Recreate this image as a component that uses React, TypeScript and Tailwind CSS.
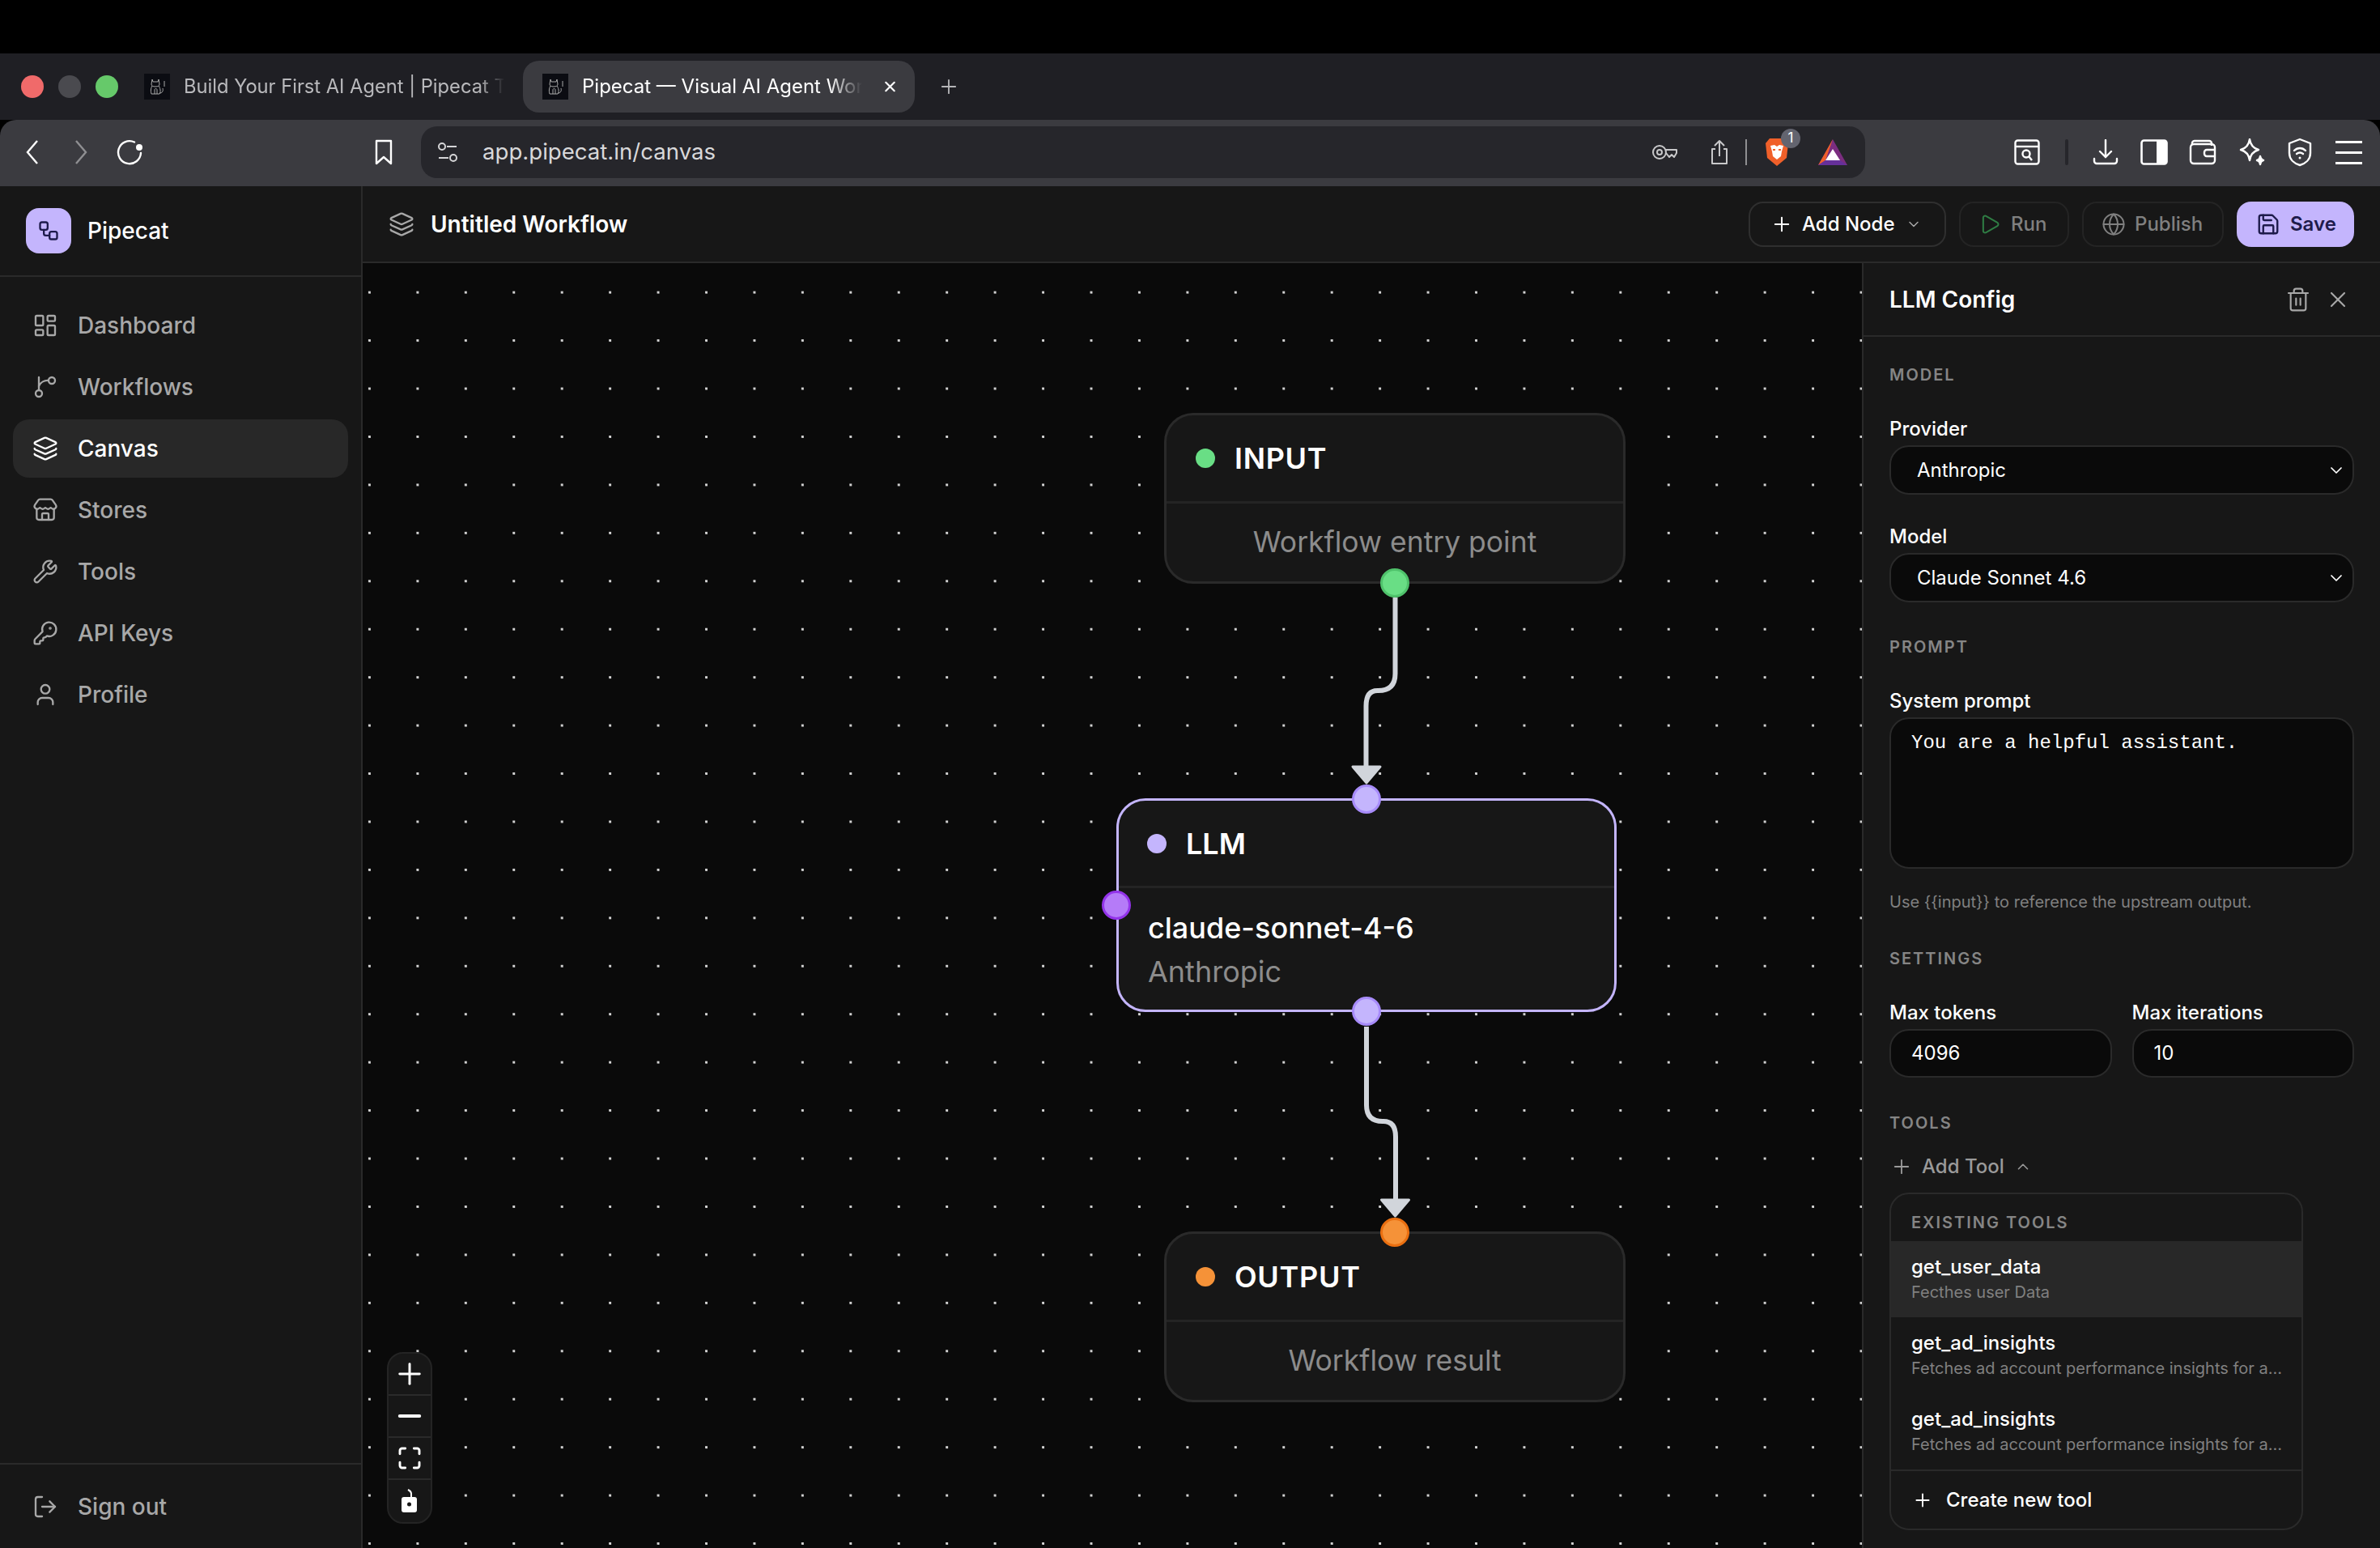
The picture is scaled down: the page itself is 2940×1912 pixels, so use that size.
import {
  ChevronDown,
  ChevronUp,
  Globe,
  KeyRound,
  Layers,
  LayoutDashboard,
  LogOut,
  Maximize,
  Minus,
  Play,
  Plus,
  Save,
  Store,
  Trash2,
  User,
  Workflow,
  Wrench,
  X,
} from 'lucide-react';

function BranchIcon({ className, strokeWidth }: { className?: string; strokeWidth?: number }) {
  return (
    <svg viewBox="0 0 24 24" className={className} fill="none" stroke="currentColor" strokeWidth={strokeWidth} strokeLinecap="round" strokeLinejoin="round">
      <path d="M6 3v12" />
      <circle cx="18" cy="6" r="3" />
      <circle cx="6" cy="18" r="3" />
      <path d="M15 6a9 9 0 0 0-9 5" />
    </svg>
  );
}

const navItems = [
  { label: 'Dashboard', icon: LayoutDashboard },
  { label: 'Workflows', icon: BranchIcon },
  { label: 'Canvas', icon: Layers, active: true },
  { label: 'Stores', icon: Store },
  { label: 'Tools', icon: Wrench },
  { label: 'API Keys', icon: KeyRound },
  { label: 'Profile', icon: User },
];

const tools = [
  { name: 'get_user_data', desc: 'Fecthes user Data', active: true },
  { name: 'get_ad_insights', desc: 'Fetches ad account performance insights for a...' },
  { name: 'get_ad_insights', desc: 'Fetches ad account performance insights for a...' },
];

function CatFavicon() {
  return (
    <div className="flex h-[32px] w-[32px] shrink-0 items-center justify-center bg-[#0b0c12]">
      <svg viewBox="0 0 32 32" className="h-[32px] w-[32px]" fill="none" stroke="#a8a8a8" strokeWidth="1">
        <path d="M10 7l1 3h6l1-3 1 6c0 2-2 3-5 3s-5-1-5-3z" />
        <path d="M10 15c-2 3-2 7-1 10h10c2-3 1-7-1-10" />
        <path d="M13 25v-5c0-2 3-2 3 0v5" />
        <path d="M19 24c3 0 5-2 4-6M25 9v7" />
      </svg>
    </div>
  );
}

function BrowserChrome() {
  return (
    <div className="shrink-0 font-['Inter',sans-serif]">
      <div className="h-[66px] bg-black" />
      <div className="flex h-[82px] items-center bg-[#1f1f24]">
        <div className="ml-[26px] flex w-[152px] gap-[18px]">
          <span className="h-[28px] w-[28px] rounded-full bg-[#f06a6a]" />
          <span className="h-[28px] w-[28px] rounded-full bg-[#4a4a4f]" />
          <span className="h-[28px] w-[28px] rounded-full bg-[#66c96a]" />
        </div>
        <div className="flex w-[468px] items-center gap-[17px]">
          <CatFavicon />
          <span className="w-[396px] whitespace-nowrap text-[23.7px] text-[#b9b9bc] [mask-image:linear-gradient(to_right,black_92%,transparent)]">
            Build Your First AI Agent | Pipecat T
          </span>
        </div>
        <div className="flex h-[64px] w-[484px] items-center rounded-[20px] bg-[#3b3b40] pl-[24px] pr-[20px]">
          <CatFavicon />
          <span className="ml-[17px] w-[346px] whitespace-nowrap text-[24px] text-white [mask-image:linear-gradient(to_right,black_88%,transparent)]">
            Pipecat — Visual AI Agent Wor
          </span>
          <X className="ml-[24px] h-[26px] w-[26px] text-white" strokeWidth={2.4} />
        </div>
        <Plus className="ml-[28px] h-[28px] w-[28px] text-[#b5b5b8]" strokeWidth={1.6} />
      </div>
      <div className="flex h-[82px] items-center rounded-t-[20px] bg-[#3b3b40] pb-[2px]">
        <svg viewBox="0 0 16 32" className="ml-[32px] h-[32px] w-[16px]" fill="none" stroke="white" strokeWidth="2.4">
          <path d="M14 2L2 16l12 14" />
        </svg>
        <svg viewBox="0 0 16 32" className="ml-[44px] h-[32px] w-[16px]" fill="none" stroke="#8f8f92" strokeWidth="2.4">
          <path d="M2 2l12 14L2 30" />
        </svg>
        <svg viewBox="0 0 34 32" className="ml-[36px] h-[32px] w-[34px]" fill="none" stroke="white" strokeWidth="2.4">
          <path d="M22 3.5A14 14 0 1 0 30 17" strokeLinecap="round" />
          <circle cx="28" cy="10" r="4" fill="white" stroke="none" />
        </svg>
        <svg viewBox="0 0 24 32" className="ml-[284px] h-[32px] w-[24px]" fill="none" stroke="white" strokeWidth="2.4" strokeLinejoin="round">
          <path d="M3 2h18v28l-9-8-9 8z" />
        </svg>
        <div className="ml-[34px] flex h-[64px] w-[1784px] items-center rounded-[20px] bg-[#26262b] pl-[20px]">
          <svg viewBox="0 0 26 26" className="h-[26px] w-[26px]" fill="none" stroke="#d5d5d7" strokeWidth="2">
            <circle cx="6" cy="6" r="4" />
            <path d="M12 6h12M2 20h12" />
            <circle cx="20" cy="20" r="4" />
          </svg>
          <span className="ml-[30px] text-[27.6px] text-[#d8d8da]">app.pipecat.in/canvas</span>
          <div className="ml-auto flex items-center">
            <svg viewBox="0 0 32 26" className="h-[26px] w-[32px]" fill="none" stroke="#c8c8ca" strokeWidth="2">
              <circle cx="10" cy="13" r="8" />
              <circle cx="10" cy="13" r="3" />
              <path d="M18 10h13v4l-3 5-3-3-3 3-4-5" strokeLinejoin="round" />
            </svg>
            <svg viewBox="0 0 22 32" className="ml-[41px] h-[32px] w-[22px]" fill="none" stroke="#c8c8ca" strokeWidth="2" strokeLinejoin="round">
              <path d="M6 12H2v18h18V12h-4M11 21V2M5 8l6-6 6 6" />
            </svg>
            <span className="ml-[21px] h-[32px] w-[2px] bg-[#8f8f92]" />
            <div className="relative ml-[22px] h-[36px] w-[30px]">
              <svg viewBox="0 0 30 36" className="h-[36px] w-[30px]">
                <path d="M6 1h18l5 6-2 18-12 10L3 25 1 7z" fill="#f0602a" />
                <path d="M7 10l5-1 3 2 3-2 5 1-2 7-1 6-5 4-5-4-1-6z" fill="white" />
                <path d="M10 14h3v2h-3zM17 14h3v2h-3z" fill="#f0602a" />
              </svg>
              <span className="absolute left-[20px] top-[-11px] flex h-[24px] w-[24px] items-center justify-center rounded-full bg-[#63646f] text-[17px] text-white">
                1
              </span>
            </div>
            <svg viewBox="0 0 36 32" className="ml-[36px] mr-[22px] h-[32px] w-[36px]">
              <path d="M18 0L0 32h36z" fill="#7b2d80" />
              <path d="M18 0L0 32l9-6z" fill="#f0602a" />
              <path d="M0 32h36l-9-6H9z" fill="#66309a" />
              <path d="M18 12L9 26h18z" fill="white" />
            </svg>
          </div>
        </div>
        <div className="flex items-center text-white">
          <svg viewBox="0 0 32 32" className="ml-[184px] h-[32px] w-[32px]" fill="none" stroke="white" strokeWidth="2.4">
            <rect x="1.5" y="1.5" width="29" height="29" rx="3" />
            <path d="M2 9h28" />
            <circle cx="15" cy="18" r="4.5" />
            <path d="M18 21l4 5" />
          </svg>
          <span className="ml-[31px] h-[32px] w-[4px] rounded-full bg-[#26262b]" />
          <svg viewBox="0 0 32 32" className="ml-[30px] h-[32px] w-[32px]" fill="none" stroke="white" strokeWidth="2.4" strokeLinecap="round">
            <path d="M16 1v21M9 15l7 7 7-7M2 24v3a3 3 0 0 0 3 3h22a3 3 0 0 0 3-3v-3" />
          </svg>
          <svg viewBox="0 0 34 32" className="ml-[27px] h-[32px] w-[34px]">
            <rect x="1.5" y="1.5" width="31" height="29" rx="3" fill="none" stroke="white" strokeWidth="2.6" />
            <rect x="20" y="2" width="13" height="28" fill="white" />
          </svg>
          <svg viewBox="0 0 34 32" className="ml-[26px] h-[32px] w-[34px]" fill="none" stroke="white" strokeWidth="2.4">
            <path d="M4 6a3 3 0 0 1 3-4h18a3 3 0 0 1 3 3v3" />
            <rect x="2" y="6" width="30" height="24" rx="4" />
            <path d="M32 13H22a3 3 0 0 0-3 3v2a3 3 0 0 0 3 3h10" />
          </svg>
          <svg viewBox="0 0 34 34" className="ml-[26px] h-[34px] w-[34px]" fill="none" stroke="white" strokeWidth="2.4" strokeLinejoin="round">
            <path d="M15 1c1 7 4 11 11 13-7 2-10 6-11 13-1-7-4-11-11-13 7-2 10-6 11-13z" />
            <path d="M28 22c.4 3 1.500 4.400 4 5-2.500.6-3.600 2-4 5-.4-3-1.500-4.400-4-5 2.500-.6 3.600-2 4-5z" fill="white" />
          </svg>
          <svg viewBox="0 0 30 36" className="ml-[28px] h-[36px] w-[30px]" fill="none" stroke="white" strokeWidth="2.4" strokeLinecap="round">
            <path d="M15 2l13 5v12c0 8-6 13-13 15C8 32 2 27 2 19V7z" strokeLinejoin="round" />
            <path d="M8 16c4-4 10-4 14 0M11 20c2.500-2 5.500-2 8 0" />
            <circle cx="15" cy="25" r="1.500" fill="white" stroke="none" />
          </svg>
          <div className="ml-[29px] flex w-[33px] flex-col gap-[10px]">
            <span className="h-[3px] bg-white" />
            <span className="h-[3px] bg-white" />
            <span className="h-[3px] bg-white" />
          </div>
        </div>
      </div>
    </div>
  );
}

function Sidebar() {
  return (
    <aside className="flex w-[448px] shrink-0 flex-col border-r-2 border-[#2a2a2a] bg-[#171717]">
      <div className="flex h-[112px] shrink-0 items-center gap-[20px] border-b-2 border-[#2a2a2a] pl-[32px]">
        <div className="flex h-[56px] w-[56px] items-center justify-center rounded-[16px] bg-[#c4b5fd]">
          <Workflow className="h-[28px] w-[28px] text-[#1e1b4b]" strokeWidth={2} />
        </div>
        <span className="text-[28px] font-medium text-white">Pipecat</span>
      </div>
      <nav className="flex flex-col gap-[4px] px-[16px] pt-[24px]">
        {navItems.map((item) => (
          <div
            key={item.label}
            className={
              item.active
                ? 'flex h-[72px] items-center gap-[24px] rounded-[20px] bg-[#282828] pl-[24px] text-white'
                : 'flex h-[72px] items-center gap-[24px] rounded-[20px] pl-[24px] text-[#a8a8a8]'
            }
          >
            <item.icon className="h-[32px] w-[32px]" strokeWidth={1.75} />
            <span className="text-[28px] font-medium">{item.label}</span>
          </div>
        ))}
      </nav>
      <div className="mt-auto flex h-[105px] items-center gap-[24px] border-t-2 border-[#2a2a2a] pl-[40px] text-[#a8a8a8]">
        <LogOut className="h-[32px] w-[32px]" strokeWidth={1.75} />
        <span className="text-[28px] font-medium">Sign out</span>
      </div>
    </aside>
  );
}

function TopBar() {
  return (
    <header className="flex h-[95px] shrink-0 items-center border-b-2 border-[#2a2a2a] bg-[#171717] pl-[32px] pr-[32px]">
      <Layers className="h-[32px] w-[32px] text-[#a8a8a8]" strokeWidth={1.75} />
      <span className="ml-[20px] text-[28px] font-semibold text-white">Untitled Workflow</span>
      <div className="ml-auto flex items-center gap-[16px]">
        <div className="flex h-[56px] w-[244px] items-center rounded-[18px] border-2 border-[#2f2f2f] pl-[25px] text-white">
          <Plus className="h-[28px] w-[28px]" strokeWidth={1.75} />
          <span className="ml-[11px] text-[24px] font-medium">Add Node</span>
          <ChevronDown className="ml-[14px] h-[20px] w-[20px] text-[#a8a8a8]" strokeWidth={1.75} />
        </div>
        <div className="flex h-[56px] w-[136px] items-center gap-[12px] rounded-[18px] border-2 border-[#242424] pl-[22px] text-[#808080]">
          <Play className="h-[28px] w-[28px] text-[#2f7d44]" strokeWidth={1.75} />
          <span className="text-[24px] font-medium">Run</span>
        </div>
        <div className="flex h-[56px] w-[175px] items-center gap-[11px] rounded-[18px] border-2 border-[#242424] pl-[22px] text-[#808080]">
          <Globe className="h-[30px] w-[30px]" strokeWidth={1.6} />
          <span className="text-[24px] font-medium">Publish</span>
        </div>
        <div className="flex h-[56px] w-[145px] items-center gap-[12px] rounded-[18px] bg-[#c4b5fd] pl-[24px] text-[#1e1b4b]">
          <Save className="h-[30px] w-[30px]" strokeWidth={1.9} />
          <span className="text-[24px] font-semibold">Save</span>
        </div>
      </div>
    </header>
  );
}

function Handle({ className }: { className: string }) {
  return <span className={`absolute h-[36px] w-[36px] rounded-full border-[3px] ${className}`} />;
}

function SimpleNode({ title, body, dot, className, children }: { title: string; body: string; dot: string; className: string; children: React.ReactNode }) {
  return (
    <div className={`absolute h-[211px] w-[570px] rounded-[36px] border-[3px] border-[#2a2a2a] bg-[#171717] ${className}`}>
      {children}
      <div className="flex h-[109px] items-center gap-[24px] border-b-[3px] border-[#242424] pl-[36px]">
        <span className={`h-[24px] w-[24px] rounded-full ${dot}`} />
        <span className="text-[36px] font-semibold tracking-[0.7px] text-white">{title}</span>
      </div>
      <div className="flex h-[96px] items-center justify-center text-[35.5px] text-[#8c8c8c]">{body}</div>
    </div>
  );
}

function Canvas() {
  return (
    <main className="relative min-w-0 flex-1 overflow-hidden bg-[#0a0a0a] bg-[radial-gradient(circle_at_8.5px_36.1px,#d4d4d4_1.4px,transparent_1.9px)] bg-size-[59.45px_59.45px]">
      <svg viewBox="448 325 1852 1587" className="absolute inset-0 h-full w-full" fill="none">
        <path d="M1723.500 738V832q0 21-21 21h-1q-14 0-14 19V952" stroke="#d1d5db" strokeWidth="6" />
        <path d="M1671 947h34l-17 20z" fill="#d1d5db" stroke="#d1d5db" strokeWidth="3" strokeLinejoin="round" />
        <path d="M1688 1268V1365q0 20 20 20h1q15 0 15 19V1486" stroke="#d1d5db" strokeWidth="6" />
        <path d="M1706.500 1482h34l-17 20z" fill="#d1d5db" stroke="#d1d5db" strokeWidth="3" strokeLinejoin="round" />
      </svg>

      <SimpleNode title="INPUT" body="Workflow entry point" dot="bg-[#69de85]" className="left-[990px] top-[185px]">
        <Handle className="bottom-[-20px] left-[264px] border-[#4fc26b] bg-[#69de85]" />
      </SimpleNode>

      <div className="absolute left-[931px] top-[661px] h-[264px] w-[618px] rounded-[36px] border-[3px] border-[#c4b5fd] bg-[#171717]">
        <Handle className="left-[288px] top-[-20px] border-[#a78bfa] bg-[#c4b5fd]" />
        <Handle className="left-[-21px] top-[111px] border-[#9333ea] bg-[#b57bf8]" />
        <Handle className="bottom-[-20px] left-[288px] border-[#a78bfa] bg-[#c4b5fd]" />
        <div className="flex h-[108px] items-center gap-[24px] border-b-[3px] border-[#242424] pl-[35px]">
          <span className="h-[24px] w-[24px] rounded-full bg-[#c4b5fd]" />
          <span className="text-[36px] font-semibold text-white">LLM</span>
        </div>
        <div className="pl-[36px] pt-[22px]">
          <div className="text-[36px] font-medium leading-[54px] text-white">claude-sonnet-4-6</div>
          <div className="text-[36px] leading-[54px] text-[#8c8c8c]">Anthropic</div>
        </div>
      </div>

      <SimpleNode title="OUTPUT" body="Workflow result" dot="bg-[#f59238]" className="left-[990px] top-[1196px]">
        <Handle className="left-[264px] top-[-20px] border-[#ea6f10] bg-[#f59238]" />
      </SimpleNode>

      <div className="absolute left-[30px] top-[1345px] w-[56px] overflow-hidden rounded-[20px] border-2 border-[#242424] bg-[#171717] text-white">
        <div className="flex h-[52px] items-center justify-center border-b-2 border-[#2a2a2a]">
          <Plus className="h-[42px] w-[42px]" strokeWidth={1.7} />
        </div>
        <div className="flex h-[52px] items-center justify-center border-b-2 border-[#2a2a2a]">
          <Minus className="h-[42px] w-[42px]" strokeWidth={2.2} />
        </div>
        <div className="flex h-[52px] items-center justify-center border-b-2 border-[#2a2a2a]">
          <Maximize className="h-[32px] w-[32px]" strokeWidth={2.2} />
        </div>
        <div className="flex h-[52px] items-center justify-center">
          <svg viewBox="0 0 24 30" className="h-[30px] w-[24px]">
            <path d="M14 10V6c0-3-2-4-4-5" fill="none" stroke="white" strokeWidth="2" />
            <rect x="2" y="10" width="19" height="19" rx="3" fill="white" />
            <circle cx="11.500" cy="19" r="2.500" fill="#171717" />
          </svg>
        </div>
      </div>
    </main>
  );
}

function SectionLabel({ children, className }: { children: React.ReactNode; className: string }) {
  return <div className={`h-[30px] text-[20px] font-semibold uppercase leading-[30px] tracking-[2px] text-[#858585] ${className}`}>{children}</div>;
}

function FieldLabel({ children, className }: { children: React.ReactNode; className: string }) {
  return <div className={`h-[32px] text-[24px] font-medium leading-[32px] text-white ${className}`}>{children}</div>;
}

function SelectBox({ value }: { value: string }) {
  return (
    <div className="mt-[4px] flex h-[61px] items-center justify-between rounded-[24px] border-2 border-[#2a2a2a] bg-[#0a0a0a] pl-[32px] pr-[8px] text-[24px] text-white">
      {value}
      <ChevronDown className="h-[24px] w-[24px]" strokeWidth={1.75} />
    </div>
  );
}

function ConfigPanel() {
  return (
    <aside className="w-[640px] shrink-0 border-l-2 border-[#2a2a2a] bg-[#171717]">
      <div className="flex h-[91px] items-center justify-between border-b-2 border-[#2a2a2a] pl-[32px] pr-[36px]">
        <span className="text-[28px] font-semibold text-white">LLM Config</span>
        <div className="flex items-center gap-[17px] text-[#a8a8a8]">
          <Trash2 className="h-[32px] w-[32px]" strokeWidth={1.6} />
          <X className="h-[32px] w-[32px]" strokeWidth={1.6} />
        </div>
      </div>
      <div className="pl-[32px] pr-[32px]">
        <SectionLabel className="mt-[32px]">Model</SectionLabel>
        <FieldLabel className="mt-[36px]">Provider</FieldLabel>
        <SelectBox value="Anthropic" />
        <FieldLabel className="mt-[36px]">Model</FieldLabel>
        <SelectBox value="Claude Sonnet 4.6" />
        <SectionLabel className="mt-[40px]">Prompt</SectionLabel>
        <FieldLabel className="mt-[36px]">System prompt</FieldLabel>
        <div className="mt-[4px] h-[187px] rounded-[24px] border-2 border-[#2a2a2a] bg-[#0a0a0a] pl-[25px] pt-[14px] font-['Liberation_Mono',monospace] text-[24px] leading-[32px] text-white">
          You are a helpful assistant.
        </div>
        <div className="mt-[27px] h-[28px] text-[20px] leading-[28px] text-[#808080]">Use {'{{input}}'} to reference the upstream output.</div>
        <SectionLabel className="mt-[41px]">Settings</SectionLabel>
        <div className="mt-[36px] grid grid-cols-2 gap-[25px]">
          <div>
            <FieldLabel className="">Max tokens</FieldLabel>
            <div className="mt-[4px] flex h-[60px] items-center rounded-[24px] border-2 border-[#2a2a2a] bg-[#0a0a0a] pl-[25px] text-[24px] text-white">4096</div>
          </div>
          <div>
            <FieldLabel className="">Max iterations</FieldLabel>
            <div className="mt-[4px] flex h-[60px] items-center rounded-[24px] border-2 border-[#2a2a2a] bg-[#0a0a0a] pl-[25px] text-[24px] text-white">10</div>
          </div>
        </div>
        <SectionLabel className="mt-[41px]">Tools</SectionLabel>
        <div className="mt-[19px] flex h-[40px] items-center text-[#9a9a9a]">
          <Plus className="ml-[1px] h-[28px] w-[28px]" strokeWidth={1.6} />
          <span className="ml-[11px] text-[24px] font-medium">Add Tool</span>
          <ChevronUp className="ml-[12px] h-[22px] w-[22px]" strokeWidth={1.75} />
        </div>
        <div className="mt-[12px] w-[511px] overflow-hidden rounded-[24px] border-2 border-[#2a2a2a] bg-[#171717]">
          <div className="h-[58px] pl-[25px] pt-[21px] text-[20px] font-semibold uppercase leading-[28px] tracking-[2px] text-[#858585]">Existing tools</div>
          {tools.map((tool, i) => (
            <div key={i} className={tool.active ? 'h-[94px] bg-[#282828] pl-[25px] pt-[16px]' : 'h-[94px] pl-[25px] pt-[16px]'}>
              <div className="text-[24px] font-medium leading-[32px] text-white">{tool.name}</div>
              <div className="whitespace-nowrap text-[20px] leading-[30px] text-[#808080]">{tool.desc}</div>
            </div>
          ))}
          <div className="flex h-[73px] items-center border-t-2 border-[#2a2a2a] pl-[26px] text-white">
            <Plus className="h-[26px] w-[26px]" strokeWidth={1.75} />
            <span className="ml-[16px] text-[24px] font-medium">Create new tool</span>
          </div>
        </div>
      </div>
    </aside>
  );
}

export default function App() {
  return (
    <div className="flex h-[1912px] w-[2940px] flex-col overflow-hidden bg-black font-['Inter',sans-serif]">
      <BrowserChrome />
      <div className="flex min-h-0 flex-1">
        <Sidebar />
        <div className="flex min-w-0 flex-1 flex-col">
          <TopBar />
          <div className="flex min-h-0 flex-1">
            <Canvas />
            <ConfigPanel />
          </div>
        </div>
      </div>
    </div>
  );
}
